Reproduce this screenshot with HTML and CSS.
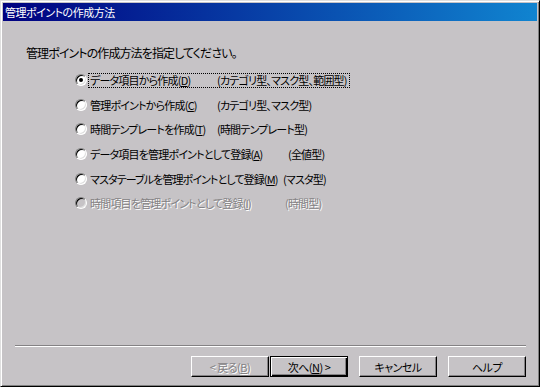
FILE: index.html
```html
<!DOCTYPE html>
<html>
<head>
  <title>管理ポイントの作成方法</title>
  <link rel="stylesheet" href="styles.css">
</head>
<body>
  <div class="window">
    <div class="titlebar">管理ポイントの作成方法</div>

    <div class="content">
      <p class="lead">管理ポイントの作成方法を指定してください。</p>

      <div class="options">
        <div class="opt">
          <span class="radio checked"></span>
          <span class="focus">
            <span class="label">データ項目から作成(<u>D</u>)</span>
            <span class="note">(カテゴリ型、マスク型、範囲型)</span>
          </span>
        </div>
        <div class="opt">
          <span class="radio"></span>
          <span class="text">
            <span class="label">管理ポイントから作成(<u>C</u>)</span>
            <span class="note">(カテゴリ型、マスク型)</span>
          </span>
        </div>
        <div class="opt">
          <span class="radio"></span>
          <span class="text">
            <span class="label">時間テンプレートを作成(<u>T</u>)</span>
            <span class="note">(時間テンプレート型)</span>
          </span>
        </div>
        <div class="opt">
          <span class="radio"></span>
          <span class="text">
            <span class="label w-a">データ項目を管理ポイントとして登録(<u>A</u>)</span>
            <span class="note">(全値型)</span>
          </span>
        </div>
        <div class="opt">
          <span class="radio"></span>
          <span class="text">
            <span class="label w-m">マスタテーブルを管理ポイントとして登録(<u>M</u>)</span>
            <span class="note">(マスタ型)</span>
          </span>
        </div>
        <div class="opt disabled">
          <span class="radio"></span>
          <span class="text">
            <span class="label w-i">時間項目を管理ポイントとして登録(<u>I</u>)</span>
            <span class="note">(時間型)</span>
          </span>
        </div>
      </div>
    </div>

    <div class="footer">
      <div class="separator"></div>
      <div class="buttons">
        <button class="btn" disabled>&lt;&nbsp;戻る(<u>B</u>)</button>
        <button class="btn default">次へ(<u>N</u>)&nbsp;&gt;</button>
        <button class="btn spaced">キャンセル</button>
        <button class="btn spaced">ヘルプ</button>
      </div>
    </div>
  </div>
</body>
</html>
```

FILE: styles.css
```css
* { box-sizing: border-box; }
body {
  margin: 0;
  background: #c6c3c6;
  font-family: "Noto Sans CJK JP", "Noto Sans", sans-serif;
  font-size: 11px;
  font-feature-settings: "palt";
  letter-spacing: -0.5px;
  color: #000;
}
.window {
  width: 540px;
  height: 387px;
  display: flex;
  flex-direction: column;
  background: #c6c3c6;
  border: 1px solid;
  border-color: #dfdfdf #000 #000 #dfdfdf;
  box-shadow: inset 1px 1px 0 #fff, inset -1px -1px 0 #808080;
  padding: 2px;
}
.titlebar {
  height: 18px;
  line-height: 18px;
  padding-left: 2px;
  color: #fff;
  background: linear-gradient(to right, #000080, #1084d0);
}
.content {
  flex: 1;
  padding: 0 0 0 23px;
}
.lead {
  margin: 25px 0 0;
  line-height: 14px;
  font-size: 12px;
  letter-spacing: -0.9px;
}
.options {
  margin-top: 8px;
  padding-left: 49px;
}
.opt {
  height: 24.6px;
  display: flex;
  align-items: center;
  white-space: nowrap;
  letter-spacing: -0.8px;
}
.radio {
  flex: none;
  width: 12px;
  height: 12px;
  border-radius: 50%;
  background: #fff;
  border: 1px solid;
  border-color: #808080 #fff #fff #808080;
  box-shadow: inset 1px 1px 0 #000, inset -1px -1px 0 #dfdfdf;
  display: flex;
  align-items: center;
  justify-content: center;
  margin-right: 1px;
}
.radio.checked::after {
  content: "";
  width: 4px;
  height: 4px;
  border-radius: 50%;
  background: #000;
}
.focus, .text {
  display: flex;
  align-items: center;
  height: 15px;
  padding: 0 2px 0 1px;
  border: 1px dotted transparent;
}
.focus { border-color: #000; }
.label {
  flex: none;
  width: 127px;
}
.label.w-a { width: 198px; }
.label.w-m { width: 193px; letter-spacing: -0.9px; }
.label.w-i { width: 195px; }
.opt.disabled { color: #848284; text-shadow: 1px 1px 0 #fff; }
.opt.disabled .radio { background: #c6c3c6; }
.footer {
  padding: 0 11px 7px 12px;
}
.separator {
  height: 2px;
  border-top: 1px solid #848284;
  border-bottom: 1px solid #fff;
}
.buttons {
  margin-top: 9px;
  display: flex;
  justify-content: flex-end;
}
.btn {
  width: 78px;
  height: 21px;
  padding: 0;
  font: inherit;
  letter-spacing: inherit;
  font-feature-settings: inherit;
  background: #c6c3c6;
  color: #000;
  border: 1px solid;
  border-color: #fff #000 #000 #fff;
  box-shadow: inset -1px -1px 0 #848284;
  margin-left: 1px;
}
.btn.default {
  border: 1px solid #000;
  box-shadow: inset 1px 1px 0 #fff, inset -1px -1px 0 #000, inset -2px -2px 0 #848284;
}
.btn.spaced { margin-left: 11px; }
.btn:disabled {
  color: #848284;
  text-shadow: 1px 1px 0 #fff;
}
u { text-decoration: underline; }
```
